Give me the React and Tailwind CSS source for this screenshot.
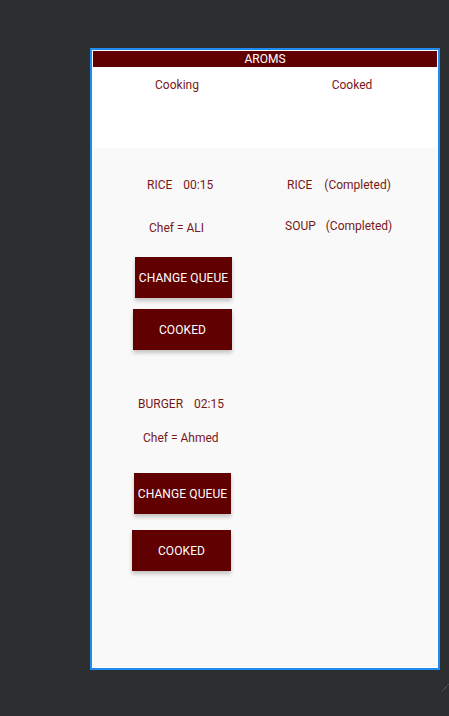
const Btn = ({ label, className }) => (
  <button
    type="button"
    className={`h-[41px] bg-[#600000] text-white text-[12px] font-normal tracking-[0.1px] shadow-[0_3px_4px_rgba(0,0,0,0.22)] ${className}`}
  >
    {label}
  </button>
)

const App = () => {
  return (
    <div className="relative w-[449px] h-[716px] bg-[#2d2e30] overflow-hidden pt-[48px] font-['Roboto',sans-serif]">
      <div className="ml-[90px] w-[350px] h-[622px] border-2 border-[#1e8cf0] p-px bg-white flex flex-col">
        <div className="h-[16px] bg-[#600000] text-white text-[12px] leading-[16px] text-center">AROMS</div>
        <div className="h-[81px] bg-white flex text-[12px] leading-[14px] text-[#781818] pt-[11px]">
          <div className="w-[172px] text-center pr-[4px]">Cooking</div>
          <div className="flex-1 text-center pl-[2px]">Cooked</div>
        </div>
        <div className="flex-1 bg-[#f9f9f9] flex text-[12px] leading-[14px] text-[#781818]">
          <div className="w-[172px] flex flex-col items-start">
            <div className="mt-[30px] ml-[54px] flex gap-[11px]">
              <span>RICE</span>
              <span>00:15</span>
            </div>
            <div className="mt-[29px] ml-[56px]">Chef = ALI</div>
            <Btn label="CHANGE QUEUE" className="mt-[22px] ml-[42px] w-[97px]" />
            <Btn label="COOKED" className="mt-[11px] ml-[40px] w-[99px]" />
            <div className="mt-[47px] ml-[45px] flex gap-[11px]">
              <span>BURGER</span>
              <span>02:15</span>
            </div>
            <div className="mt-[20px] ml-[50px]">Chef = Ahmed</div>
            <Btn label="CHANGE QUEUE" className="mt-[28px] ml-[41px] w-[97px]" />
            <Btn label="COOKED" className="mt-[16px] ml-[39px] w-[99px]" />
          </div>
          <div className="flex-1 flex flex-col items-start">
            <div className="mt-[30px] ml-[22px] flex gap-[12px]">
              <span>RICE</span>
              <span>(Completed)</span>
            </div>
            <div className="mt-[27px] ml-[20px] flex gap-[10px]">
              <span>SOUP</span>
              <span>(Completed)</span>
            </div>
          </div>
        </div>
      </div>
      <svg className="absolute left-[442px] top-[683px]" width="7" height="8" viewBox="0 0 7 8">
        <path d="M0.5 7.5 L6.5 1.5" stroke="#8a8a8a" strokeWidth="1" strokeDasharray="1 1" />
      </svg>
    </div>
  )
}

export default App
